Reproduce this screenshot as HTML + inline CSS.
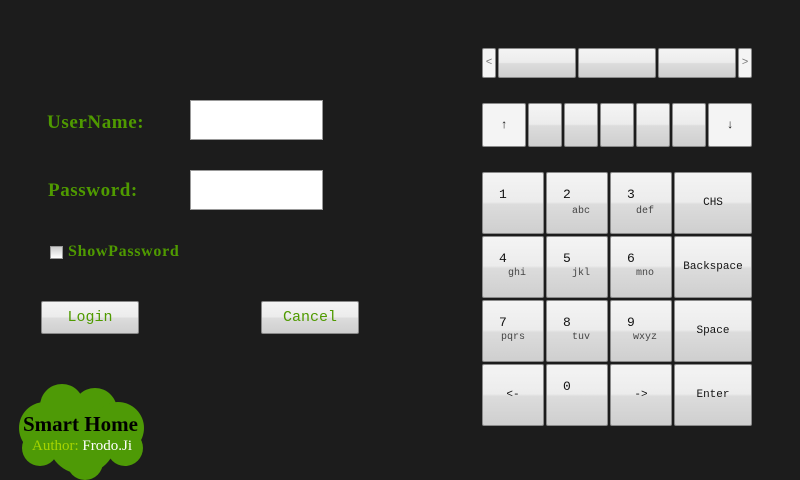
<!DOCTYPE html>
<html><head><style>
body{margin:0;width:800px;height:480px;background:#1c1c1c;position:relative;overflow:hidden;font-family:"Liberation Serif",serif}
.a{position:absolute}
.k{position:absolute;box-sizing:border-box;border:1px solid #8a8a8a;border-radius:2px;background:linear-gradient(#f4f4f4 0%,#ececec 48%,#dcdcdc 52%,#cfcfcf 100%);font-family:"Liberation Mono",monospace;color:#111}
.w{background:#f4f4f4}
.lbl{position:absolute;color:#4f9a00;font-weight:bold;font-size:19px;letter-spacing:0.6px}
.inp{position:absolute;background:#fff;border:1px solid #999;box-sizing:border-box}
.n{position:absolute;left:16px;top:14px;font-size:13px}
.s{position:absolute;left:0;right:0;padding-left:8px;text-align:center;top:33px;font-size:10px;color:#444}
.c{position:absolute;left:0;right:0;text-align:center;top:24px;font-size:11px}
.btn{position:absolute;box-sizing:border-box;border:1px solid #888;border-radius:2px;background:linear-gradient(#f4f4f4 0%,#ececec 48%,#dcdcdc 52%,#cfcfcf 100%);color:#4f9a00;font-family:"Liberation Mono",monospace;font-size:15px;text-align:center;line-height:31px}
</style></head><body>
<div class="lbl" style="left:47px;top:112px">UserName:</div>
<div class="lbl" style="left:48px;top:180px">Password:</div>
<div class="inp" style="left:190px;top:100px;width:133px;height:40px"></div>
<div class="inp" style="left:190px;top:170px;width:133px;height:40px"></div>
<div class="a" style="left:50px;top:246px;width:13px;height:13px;box-sizing:border-box;border:1px solid #999;background:linear-gradient(#ccc,#fff)"></div>
<div class="lbl" style="left:68px;top:243px;font-size:16px;letter-spacing:0.7px">ShowPassword</div>
<div class="btn" style="left:41px;top:301px;width:98px;height:33px">Login</div>
<div class="btn" style="left:261px;top:301px;width:98px;height:33px">Cancel</div>

<svg class="a" style="left:0;top:370px" width="160" height="110"><g fill="#4e9a06">
<circle cx="62" cy="36" r="22"/><circle cx="95" cy="40" r="22"/><circle cx="45" cy="58" r="26"/><circle cx="118" cy="58" r="26"/><circle cx="82" cy="70" r="34"/><circle cx="40" cy="78" r="18"/><circle cx="125" cy="78" r="18"/><circle cx="85" cy="92" r="18"/></g></svg>
<div class="a" style="left:23px;top:412px;font-size:21px;font-weight:bold;color:#000">Smart Home</div>
<div class="a" style="left:32px;top:438px;font-size:15px;color:#a6d400">Author: <span style="color:#fff">Frodo.Ji</span></div>

<div class="k w" style="left:482px;top:48px;width:14px;height:30px;font-size:11px;color:#777;text-align:center;line-height:28px">&lt;</div>
<div class="k" style="left:498px;top:48px;width:78px;height:30px"></div>
<div class="k" style="left:578px;top:48px;width:78px;height:30px"></div>
<div class="k" style="left:658px;top:48px;width:78px;height:30px"></div>
<div class="k w" style="left:738px;top:48px;width:14px;height:30px;font-size:11px;color:#777;text-align:center;line-height:28px">&gt;</div>

<div class="k w" style="left:482px;top:103px;width:44px;height:44px;text-align:center;line-height:42px;font-size:12px">↑</div>
<div class="k" style="left:528px;top:103px;width:34px;height:44px"></div>
<div class="k" style="left:564px;top:103px;width:34px;height:44px"></div>
<div class="k" style="left:600px;top:103px;width:34px;height:44px"></div>
<div class="k" style="left:636px;top:103px;width:34px;height:44px"></div>
<div class="k" style="left:672px;top:103px;width:34px;height:44px"></div>
<div class="k w" style="left:708px;top:103px;width:44px;height:44px;text-align:center;line-height:42px;font-size:12px">↓</div>

<div class="k" style="left:482px;top:172px;width:62px;height:62px"><span class="n">1</span></div>
<div class="k" style="left:546px;top:172px;width:62px;height:62px"><span class="n">2</span><span class="s">abc</span></div>
<div class="k" style="left:610px;top:172px;width:62px;height:62px"><span class="n">3</span><span class="s">def</span></div>
<div class="k" style="left:674px;top:172px;width:78px;height:62px"><span class="c">CHS</span></div>
<div class="k" style="left:482px;top:236px;width:62px;height:62px"><span class="n">4</span><span class="s" style="top:31px">ghi</span></div>
<div class="k" style="left:546px;top:236px;width:62px;height:62px"><span class="n">5</span><span class="s" style="top:31px">jkl</span></div>
<div class="k" style="left:610px;top:236px;width:62px;height:62px"><span class="n">6</span><span class="s" style="top:31px">mno</span></div>
<div class="k" style="left:674px;top:236px;width:78px;height:62px"><span class="c">Backspace</span></div>
<div class="k" style="left:482px;top:300px;width:62px;height:62px"><span class="n">7</span><span class="s" style="top:31px;padding-left:0">pqrs</span></div>
<div class="k" style="left:546px;top:300px;width:62px;height:62px"><span class="n">8</span><span class="s" style="top:31px">tuv</span></div>
<div class="k" style="left:610px;top:300px;width:62px;height:62px"><span class="n">9</span><span class="s" style="top:31px">wxyz</span></div>
<div class="k" style="left:674px;top:300px;width:78px;height:62px"><span class="c">Space</span></div>
<div class="k" style="left:482px;top:364px;width:62px;height:62px"><span class="c">&lt;-</span></div>
<div class="k" style="left:546px;top:364px;width:62px;height:62px"><span class="n">0</span></div>
<div class="k" style="left:610px;top:364px;width:62px;height:62px"><span class="c">-&gt;</span></div>
<div class="k" style="left:674px;top:364px;width:78px;height:62px"><span class="c">Enter</span></div>
</body></html>
